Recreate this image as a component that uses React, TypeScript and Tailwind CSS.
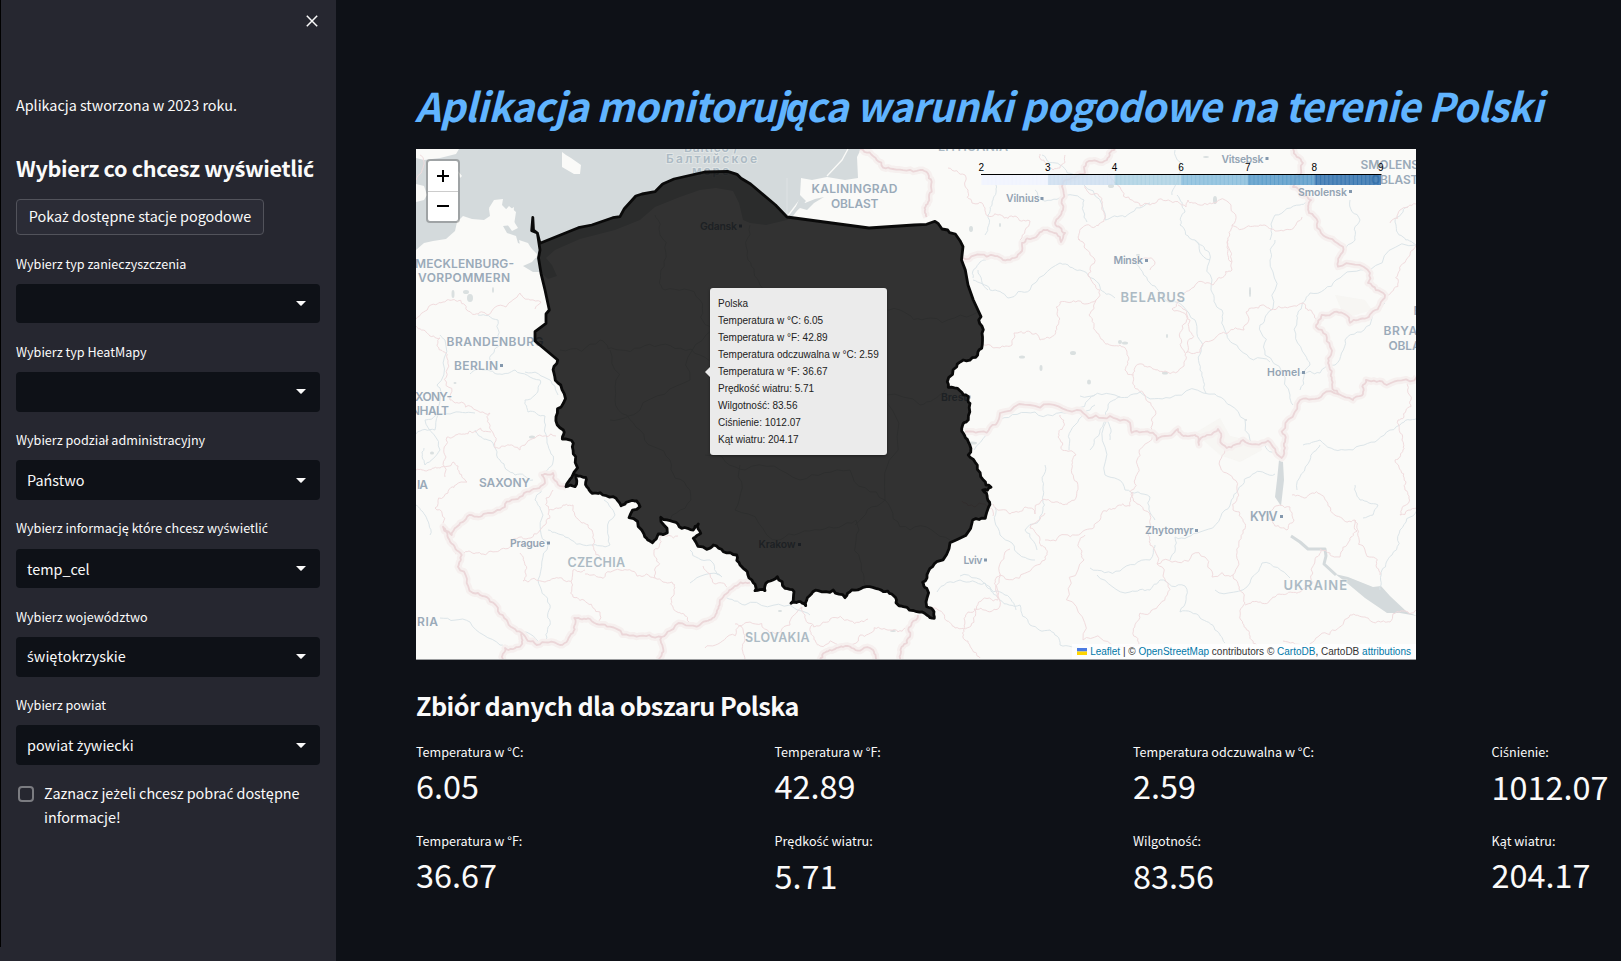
import React from "react";

type Pt = [number, number];

const parse = (s: string): Pt[] =>
  s.trim().split(/\s+/).map((p) => p.split(",").map(Number) as Pt);

/* Turns a coarse polyline into a natural looking border or river line. */
function rough(src: string, amp = 0.16, depth = 3): string {
  let pts = parse(src);
  let seed = Math.round(pts[0][0] * 13 + pts[0][1] * 7) % 9973;
  const rnd = () => {
    seed = (seed * 1103515245 + 12345) % 2147483648;
    return seed / 2147483648 - 0.5;
  };
  for (let d = 0; d < depth; d++) {
    const out: Pt[] = [];
    for (let i = 0; i < pts.length - 1; i++) {
      const [x1, y1] = pts[i];
      const [x2, y2] = pts[i + 1];
      const len = Math.hypot(x2 - x1, y2 - y1);
      out.push(pts[i]);
      if (len > 3) {
        const k = rnd() * 2 * amp;
        out.push([(x1 + x2) / 2 - (y2 - y1) * k, (y1 + y2) / 2 + (x2 - x1) * k]);
      }
    }
    out.push(pts[pts.length - 1]);
    pts = out;
  }
  return "M" + pts.map((p) => p[0].toFixed(1) + " " + p[1].toFixed(1)).join("L");
}

const NORTH_COAST =
  "540,243.3 578.4,227.7 591.8,225 612.8,217.7 620,216.7 624.3,208.7 635.8,196 642,194 655,191.7 662.6,184 674,179 704.7,172 727.6,171.3 737,174.3 741,178.3 750.6,184 775.5,205 787,217 869,228 914,225 926.6,224.3 935,221.3 938,223.3 942,229 947.7,230 949.6,232.7 955.3,234 960,240.7 963,246.7 961.5,260 965.3,270 968,285 973.3,300 981,316.7 ";
const EAST_SOUTH =
  "978.7,320 982,333.3 981.7,348.3 975.7,357.3 963.3,360 956.7,366.7 947.3,381.7 948.3,387.3 960,390.7 968.3,396.7 970,403.3 968.3,420 963.3,423.3 963.3,433.3 968.3,441.7 968.3,455 977.3,465 983.3,480 991,487.3 982.7,490 987.3,498.3 988.7,506.7 985.3,518.3 972.7,520 950,542.7 936.7,561.7 928.3,571.7 922.7,582.3 926.7,588.3 926.7,606.7 934,611.7 934.3,618.3 926.7,615 916.7,611.7 903.3,606.7 896,602.7 891.7,594 883.3,591.7 875.7,588.3 863.3,587.3 851.7,590 845,597.7 833.3,590 818.3,590.7 809.3,596 805.7,605.7 798.3,601.7 791,603.3 794,591.7 785,588.3 777.3,576.7 767.7,581.7 765,590.7 755,590.7 753.3,582.7 747.3,571.7 740,565 736.7,555 723.3,551.7 713.3,545 706.7,549.3 693.3,538.3 700.7,533.3 698.3,524 693.3,530 681.7,528.3 673.3,521.7 660.7,517.3 667.3,532.7 658.3,534 652.3,542.7 646.7,538.3 641.7,530 629,517.7 640,506.7 636.7,501 628.3,501.7 621,505.7 613.3,496.7 600,492.7 592.3,493.3 586.7,486.7 585.7,477.3 575.7,475 575,486.7 566,486.7 571.7,477.3 575.7,456.7 573.3,443.3 562.3,439 563.3,430 556,416.7 563.3,403.3 560.7,385 554,373.3 557.7,360 ";
const WEST = "L535 341L535 331.7L546 323.3L546 314L549.3 310L545 290L541 273.3L538.5 258L540 250L537.4 233L531.7 230.7L532.8 217.3L533.5 230L537.4 233L540 243.3Z";

const POLAND =
  "M" + parse(NORTH_COAST).map((p) => p.join(" ")).join("L") + rough(EAST_SOUTH, 0.2, 2).replace("M", "L") + WEST;

const MAJOR = [
  "566,487 556.7,481.7 553,473 541.7,475 545,483 526.7,491.7 506.7,501.7 490,513 476.7,516.7 460,523 451.7,535 443,526.7 450,541.7 461.7,555 458,566.7 473,593 490,601.7 506.7,620 521.7,633 536.7,645 560,645 573,633 574.3,618 590,619 610,626.7 636.7,636.7 661.7,637 670,630.7 696.7,626.7 706.7,621 716.7,613 720,600 733,588 750,582.7",
  "521.7,633 520,646.7 505,648 503,660",
  "661.7,637 663,648 658,660",
  "820,660 830,650 843,647 860,650.7 870,648 876.7,660",
  "900,660 901.7,646.7 910,636.7 911.7,623 918,615",
  "860,149 876.7,160 893,169 920,170 931.7,181.7 931.7,191.7 926,205 926.7,217",
  "962.7,258 986.7,256.7 1003,260 1020,253 1022,243 1034,238 1047.5,230 1061,242 1065,233 1055,223 1063,210 1063,183 1078,175 1085,173 1087,162 1107,160 1115,149",
  "1293,149 1303,163 1293,187 1311,200 1309,213 1321,233 1343,246.7 1338,266.7 1370,273 1368,283 1385,295 1380,305 1366.7,318 1350,322.7 1336.7,311.7 1321.7,315 1316,327 1330,346.7 1328,363 1331.7,380 1339,395",
  "965,431.7 986.7,432.7 1000,413 1040,407.7 1076.7,410 1103,418 1130,422.7 1131.7,432.7 1153,432.7 1156.7,440 1178,429 1186.7,436 1195,435 1199,445 1203,436.7 1218,429 1226.7,448 1243,440 1268,440.7 1281.7,458 1285,448 1281.7,431.7 1300,400 1323,394 1353,400 1363,394 1366,380 1386.7,385 1417,376.7",
];

const MINOR = [
  "416,319 428,308 443,302 465,305 488,315 506,307 520,293 530,300 541,302 535,309",
  "416,326 440,338 447,358 450,400 472,407 490,413 491,430 495,448 520,450 535,438 556,436",
  "445,477 447,437 470,431 491,432",
  "416,470 440,468 453,462 467,482 448,493 435,508 443,523",
  "455,554 483,554 512,540 545,525 549,510 573,505 582,523 592,530 594,550 600,557",
  "520,553 523,581 545,582 572,580 573,570 585,570",
  "571,581 573,597 600,612 598,623",
  "585,574 620,570 655,578 672,582 673,607 690,623",
  "655,578 654,550 660,538 678,536",
  "549,510 546,498 553,490",
  "703,566 715,584 727,587",
  "735,624 750,622 790,625 802,607 808,623 830,619 850,621 868,619",
  "705,648 740,625 745,660",
  "812,625 820,646 860,635 890,630 905,628",
  "924,600 938,610 955,628 971,626 974,609 1000,606 1005,552 1010,549",
  "962,501 975,507 985,504 993,516",
  "993,504 1010,514 1025,507 1035,514 1042,500 1058,502 1070,502 1078,487 1072,468 1076,455 1058,437 1060,415",
  "1130,492 1137,460 1147,443 1152,430 1145,395 1133,375 1142,364 1165,371 1184,366 1187,352 1200,352 1213,340 1228,333 1244,330 1246,312 1262,305 1285,307 1303,303 1317,320",
  "984,345 1000,348 1012,345 1014,333 1040,340 1058,325 1060,302 1096,300 1089,315 1097,333 1120,345 1125,370 1133,375",
  "1096,300 1100,290 1088,276 1094,258 1083,242 1078,239",
  "1187,352 1190,320 1172,309 1180,299 1190,290 1197,283 1213,285 1232,270 1228,240",
  "1185,353 1188,318 1178,305",
  "948,168 965,175 968,190 972,203 985,208 988,216 1015,216 1030,221 1020,240",
  "1040,154 1053,170 1060,168 1065,155",
  "1085,186 1102,204 1105,218 1082,228 1080,240",
  "1105,175 1120,187 1150,205 1186,207 1188,200 1210,203 1231,205 1232,225 1245,228 1260,225 1275,231 1302,217",
  "1232,225 1228,240 1232,262",
  "1385,297 1400,270 1410,255 1416,245",
  "1000,575 1045,560 1040,540 1030,528 1045,513",
  "1045,540 1085,530 1100,520 1103,511 1130,506 1132,492 1150,520 1150,545 1157,564 1205,557 1212,577 1233,575 1243,530 1233,510 1237,490 1225,450",
  "1157,564 1160,604 1140,613 1139,645 1083,640 1084,560 1085,535",
  "1000,575 998,600 968,612 965,640 980,658",
  "1233,575 1245,603 1241,620 1257,645",
  "1245,605 1275,597 1300,592 1313,583 1315,560 1320,549 1340,557 1350,540 1355,520 1330,507 1320,494 1292,495",
  "1283,641 1320,635 1350,615 1365,617 1390,622 1417,610",
  "1280,505 1268,515 1287,530 1294,520 1290,507 1280,505",
  "1355,520 1365,550 1380,575",
  "1417,508 1400,515 1405,490 1395,460 1402,440 1398,420 1411,400 1410,380",
  "1130,262 1146,258 1155,262 1150,270",
  "416,180 422,170 420,155",
  "1390,223 1400,210 1416,204",
];

const RIVERS = [
  "416,434 435,430 440,400 437,385 445,340 440,335",
  "470,374 485,370 500,374 515,370 540,380 535,395 525,400 528,412 545,416 547,440 553,462 545,475",
  "424,448 425,465 440,450 425,420 450,414 475,413",
  "478,315 498,320 500,345 490,360",
  "475,430 488,440 500,460 515,475 533,480",
  "525,372 550,380 558,395",
  "545,483 535,500 543,515 548,545 538,580 550,605 550,625 545,645 520,630",
  "548,530 565,537 590,545 610,545 615,515 604,500",
  "440,618 470,622 500,645 520,648",
  "690,550 710,560 722,577 690,583",
  "725,595 745,605 790,605 810,615",
  "937,592 960,580 985,583 1005,595 1016,610",
  "960,576 990,587 1000,600 1020,605 1030,625 1050,630 1060,645 1083,650",
  "995,507 1000,535 1020,555 1035,560",
  "1045,465 1043,490 1043,510 1025,530 1037,550",
  "973,280 990,290 1008,298 1030,290 1060,263 1080,270 1100,287 1115,298",
  "973,278 980,262 990,256",
  "1195,240 1209,252 1211,290 1222,310 1227,335 1240,350 1270,362",
  "1133,262 1150,283 1165,300 1195,320 1203,345 1200,370 1206,393",
  "1080,396 1115,395 1140,392 1170,398 1215,394 1230,405 1250,440 1255,443",
  "974,450 1000,420 1035,412 1070,412 1095,395",
  "1069,450 1075,425 1095,405",
  "1110,440 1105,420 1108,405 1120,397",
  "1090,450 1100,430 1107,420 1105,475 1125,490 1150,497 1155,520",
  "1275,240 1270,260 1273,308 1260,325 1265,355 1290,395 1293,405",
  "1416,245 1370,270 1336,280 1310,293 1302,305 1297,320 1305,355 1310,365 1300,390",
  "1300,373 1320,373 1335,365 1345,340 1370,325 1385,303",
  "1303,445 1320,440 1345,450 1375,442 1400,425 1417,418",
  "1297,490 1310,460 1320,445",
  "1275,474 1255,473 1238,490 1225,510 1200,532 1175,537 1170,560",
  "1280,458 1265,445",
  "1355,485 1360,500 1378,505 1373,515 1363,518",
  "1380,590 1382,570 1392,555 1400,530 1417,510",
  "1090,568 1120,571 1150,560 1155,545",
  "1097,575 1130,592 1150,590 1160,580 1185,586 1180,612 1200,618 1215,630 1225,643",
  "1215,590 1250,583 1262,563 1290,578",
  "1078,175 1060,165 1042,155",
  "1035,190 1042,200 1065,195 1084,200 1087,222",
  "1084,185 1105,220 1125,217 1150,203",
  "1177,195 1185,212 1180,225 1195,240 1210,260",
  "1270,240 1275,215 1300,205 1313,200",
  "1350,200 1360,220 1355,240 1342,250",
  "1408,207 1395,222 1403,237 1416,245",
  "996,185 993,200 988,215 985,235",
  "978,270 988,290",
  "416,505 425,515 430,535",
  "1175,150 1178,175 1172,195",
];

const BLOBS: [number, number, number, number][] = [
  [1022, 357, 3, 1.5], [1041, 368, 1.5, 3], [1073, 353, 3, 2], [1120, 342, 2, 2], [1125, 343, 3, 1.5],
  [1089, 382, 2, 2.5], [1165, 373, 3, 1.5], [1250, 292, 1, 5], [1167, 336, 1, 2], [1246, 420, 1, 1],
  [971, 229, 2, 3], [1000, 225, 1, 2], [1111, 186, 3, 2], [1215, 200, 2, 4], [1206, 157, 3, 1], [532, 437, 3, 1.5],
  [455, 383, 1.5, 1], [432, 453, 2, 1.5], [453, 294, 1.5, 4], [466, 292, 3, 2], [470, 298, 3, 4], [493, 290, 1, 3],
  [1247, 442, 5, 1], [972, 443, 5, 1.5], [893, 631, 3, 1], [780, 611, 2, 1], [1138, 255, 2, 1],
];

type L = [string, number, number, number, number?];
/* text, left, vertical centre, width, size */
const REGION: L[] = [
  ["MECKLENBURG-", 415, 263.5, 99, 12], ["VORPOMMERN", 418, 278, 92, 12], ["BRANDENBURG", 446.5, 341.5, 97, 12],
  ["XONY-", 415, 396.5, 37, 12], ["NHALT", 411, 411, 38, 12], ["SAXONY", 479, 482.5, 51, 12], ["IA", 417, 484.5, 11, 12],
  ["RIA", 417, 622, 21, 12], ["KALININGRAD", 811.5, 189, 86, 12], ["OBLAST", 831, 203.5, 47.5, 12],
  ["SMOLENSK", 1360.5, 165, 67, 12], ["OBLAST", 1371, 179.5, 47.5, 12], ["BRYANSK", 1383.5, 331, 61, 12],
  ["OBLAST", 1388.5, 346, 47.5, 12], ["B", 1413.5, 311, 9, 12], ["BERLIN", 454, 365.5, 44, 12], ["KYIV", 1250, 516.5, 27.5, 12.5],
];
const COUNTRY: L[] = [
  ["CZECHIA", 567.5, 562, 57.5, 12.5], ["SLOVAKIA", 745, 637, 64.5, 12.5], ["BELARUS", 1120.5, 297.5, 64.5, 13],
  ["UKRAINE", 1283.5, 585, 63.5, 13], ["LITHUANIA", 938, 146.5, 70, 12.5],
  ["Baltico /", 684, 147.5, 54, 12], ["Балтийское", 666, 159, 91, 12], ["море", 692, 170.5, 37, 12],
];
const CITY: L[] = [
  ["Prague", 510, 543, 35], ["Krakow", 758.5, 544.5, 37], ["Lviv", 963.5, 560, 19], ["Brest", 941, 397, 26],
  ["Gdansk", 700, 226, 37], ["Vilnius", 1006, 198.5, 33.5], ["Vitsebsk", 1221.5, 159, 42], ["Smolensk", 1298, 192, 49],
  ["Minsk", 1113.5, 260.5, 29.5], ["Homel", 1267, 372.5, 33], ["Zhytomyr", 1145, 530.5, 48.5],
];
const DOTS: Pt[] = [
  [501.5, 365.5], [1281.5, 516.5], [548.5, 543], [799.5, 544.5], [985.5, 560], [969, 397], [740.5, 226], [1042, 198.5],
  [1267, 158.5], [1350.5, 191.5], [1146.5, 260.5], [1303.5, 372.5], [1196.5, 530.5],
];

function Labels({ items, fill, weight }: { items: L[]; fill: string; weight: number }) {
  return (
    <g fill={fill} fontWeight={weight} stroke="#fafaf8" strokeWidth="2" strokeOpacity="0.35" paintOrder="stroke">
      {items.map(([t, x, y, w, s = 10.5], i) => (
        <text key={i} x={x} y={y + s * 0.36} fontSize={s} textLength={w} lengthAdjust="spacing">{t}</text>
      ))}
    </g>
  );
}

const SCALE = ["#eff3ff", "#cbddf0", "#a6cee2", "#7fb8da", "#4b93c5", "#2166a8"];

function MapCanvas() {
  return (
    <svg viewBox="416 149 1000 511" className="block h-[511px] w-[1000px]" fontFamily="Inter, 'Noto Sans', sans-serif">
      <rect x="416" y="149" width="1000" height="511" fill="#fafaf8" />
      <path fill="#d4dadc" d="M416 149H861L857 157L858 178L845 180L827 177L812 180L801 178L800 195L806 201L799 208L793 216L787 220L766 225L750 223L743 220L739 203L733 191L716 188L700 190L680 197L655 207L640 220L615 230L580 239L555 250L546 258L552 265L557 276L548 279L540 272L533 272L523 266L532 262L538 255L530 247L518 243L516 236L507 233L503 226L514 225L516 212L509 206L500 216L497 202L489 209L490 216L484 220L472 219L463 216L457 222L455 231L446 239L433 241L424 243L416 250Z" />
      <path fill="#fafaf8" d="M562 152L566 155L571 158L581 165L580 174L574 174L562 167ZM416 149H459L456 154L440 158L424 160L416 158ZM416 184L424 186L427 195L424 200L416 202ZM458 171L462 176L460 178ZM489 208L494 200L503 199L502 205L508 211L514 207L513 220L518 228L512 231L505 221L496 222ZM519 240L528 243L537 258L529 256L521 250Z" />
      <g fill="none" stroke="#fafaf8" strokeWidth="1.3">
        <path d="M848 149L842 160L827 176M800 200L787 217" />
        <path d="M787 178V214" strokeWidth="0.6" opacity="0.5" />
      </g>
      <path fill="#d4dadc" d="M800 197L805 203L815 199L824 197L814 203L807 210L800 208L793 214Z" />
      <g fill="#f3f1ee">
        <path d="M1195 433L1220 418L1230 436L1260 443L1262 450L1240 462L1220 455Z" opacity=".5" />
        <path d="M1335 295L1365 300L1372 310L1345 318Z" opacity=".5" />
      </g>
      <g fill="#d4dadc">
        {BLOBS.map(([x, y, rx, ry], i) => <ellipse key={i} cx={x} cy={y} rx={rx} ry={ry} opacity="0.85" />)}
        <path d="M1279 460L1283 462L1284 480L1281 506L1275 497L1277 480Z" />
        <path d="M1335 574L1348 577L1373 587L1381 586L1390 596L1407 612L1417 616L1400 613L1387 613L1365 598L1347 583Z" />
      </g>
      <path d="M1291 536L1300 542L1308 549L1318 549L1325 549L1326 556L1324 564L1336 575" fill="none" stroke="#d4dadc" strokeWidth="3" strokeLinejoin="round" />
      <g fill="none" stroke="#dce5e9" strokeWidth="1">{RIVERS.map((r, i) => <path key={i} d={rough(r, 0.17, 3)} />)}</g>
      <g fill="none" stroke="#f1dcde" strokeWidth="1">{MINOR.map((r, i) => <path key={i} d={rough(r, 0.24, 4)} />)}</g>
      <g fill="none" strokeLinejoin="round">
        {MAJOR.map((r, i) => <path key={i} d={rough(r, 0.2, 3)} stroke="#f6f0ef" strokeWidth="7" />)}
        {MAJOR.map((r, i) => <path key={i} d={rough(r, 0.2, 3)} stroke="#ebd6d8" strokeWidth="1.8" />)}
      </g>
      <g fill="none" stroke="#dfe3e4" strokeWidth="1">
        <path d={rough("655,215 660,235 661,270 665,290 700,300 712,330 690,380 640,410 610,420", 0.2)} />
        <path d={rough("560,350 600,340 620,350 660,345 700,355 740,370", 0.2)} />
        <path d={rough("750,225 748,260 760,285 800,300 860,290 900,310 930,318 978,312", 0.2)} />
        <path d={rough("610,350 615,400 640,430 670,460 690,490 670,520", 0.2)} />
        <path d={rough("705,455 745,470 800,480 850,470 885,500 910,530 950,540", 0.2)} />
        <path d={rough("740,465 735,510 780,540 820,530 856,520 860,560 865,588", 0.2)} />
        <path d={rough("885,400 885,500 855,525", 0.15)} />
        <path d={rough("850,395 920,405 945,390", 0.15)} />
      </g>
      <Labels items={REGION} fill="#9aaab9" weight={600} />
      <Labels items={COUNTRY} fill="#acbac4" weight={600} />
      <Labels items={CITY} fill="#93a3b3" weight={600} />
      <g fill="#8498ad">{DOTS.map(([x, y], i) => <rect key={i} x={x - 1.5} y={y - 1.5} width="3" height="3" />)}</g>
      <path d={POLAND} fill="#000" fillOpacity="0.8" stroke="#0a0a0a" strokeWidth="2.8" strokeLinejoin="round" />
      {SCALE.map((c, i) => (
        <g key={i} fill={c}>
          <rect x={981.3 + i * 66.6} y="175" width="66.7" height="10" fillOpacity="0.78" />
          {Array.from({ length: 16 }, (_, k) => (
            <rect key={k} x={983 + i * 66.6 + k * 4.1} y="175" width="1" height="10" fillOpacity="0.5" />
          ))}
        </g>
      ))}
      <path d="M981 174.5H1381.5" stroke="#000" />
      <g fontFamily="'Liberation Sans', sans-serif" fontSize="10" textAnchor="middle" fill="#000">
        {["2", "3", "4", "6", "7", "8", "9"].map((t, i) => <text key={t} x={981.3 + i * 66.6} y="170.5">{t}</text>)}
      </g>
    </svg>
  );
}

const TIP = [
  "Polska", "Temperatura w °C: 6.05", "Temperatura w °F: 42.89", "Temperatura odczuwalna w °C: 2.59", "Temperatura w °F: 36.67",
  "Prędkość wiatru: 5.71", "Wilgotność: 83.56", "Ciśnienie: 1012.07", "Kąt wiatru: 204.17",
];

function WeatherMap() {
  return (
    <div className="relative h-[511px] w-[1000px] shrink-0 overflow-hidden font-['Liberation_Sans',sans-serif]">
      <MapCanvas />
      <div className="absolute left-[10px] top-[10px] w-[34px] rounded-[4px] border-2 border-black/25 bg-white bg-clip-padding text-black">
        <button className="flex h-[31px] w-full items-center justify-center border-b border-[#ccc]">
          <svg width="12" height="12" viewBox="0 0 12 12" stroke="#000" strokeWidth="2"><path d="M6 0V12M0 6H12" /></svg>
        </button>
        <button className="flex h-[29px] w-full items-center justify-center pb-px">
          <svg width="12" height="12" viewBox="0 0 12 12" stroke="#000" strokeWidth="2"><path d="M0 6H12" /></svg>
        </button>
      </div>
      <div className="absolute left-[294px] top-[139px] h-[167px] w-[177px] rounded-[3px] bg-[#ebebeb] pl-2 pt-[7px] text-[10px] leading-[17px] text-[#222] shadow-[0_1px_3px_rgba(0,0,0,0.4)]">
        <svg className="absolute -left-[5px] top-[79px]" width="5" height="10"><path d="M5 0L0 5L5 10Z" fill="#ebebeb" /></svg>
        {TIP.map((t, i) => <div key={i} className="whitespace-nowrap">{t}</div>)}
      </div>
      <div className="absolute bottom-px right-0 flex h-[15px] items-center whitespace-pre bg-white/80 px-[5px] text-[10px] leading-[15px] text-[#333]">
        <svg width="10" height="7" className="mr-[3px]"><path d="M0 0H10V3.5H0Z" fill="#4c7be1" /><path d="M0 3.5H10V7H0Z" fill="#ffd500" /></svg>
        <span className="text-[#0078a8]">Leaflet</span>{" | © "}
        <span className="text-[#0078a8]">OpenStreetMap</span>{" contributors © "}
        <span className="text-[#0078a8]">CartoDB</span>{", CartoDB "}
        <span className="text-[#0078a8]">attributions</span>
      </div>
      <div className="absolute inset-x-0 bottom-0 h-px bg-[#9b9d9f]" />
    </div>
  );
}

function Pl({ children }: { children: string }) {
  return (
    <>
      {children.split(/([śćż]+)/).map((part, i) =>
        i % 2 ? <span key={i} className="font-['Open_Sans',sans-serif]">{part}</span> : part
      )}
    </>
  );
}

function Select({ label, value }: { label: string; value: string }) {
  return (
    <div className="mb-[14.3px] h-[74px] shrink-0">
      <div className="h-[34.4px] pt-[3px] text-[12.6px] leading-[21px]"><Pl>{label}</Pl></div>
      <div className="flex h-[39.6px] items-center justify-between rounded-[4px] bg-[#0e1117] pl-[11px] pr-[14px]">
        <span className="text-[14.4px] leading-6"><Pl>{value}</Pl></span>
        <svg width="10" height="5" viewBox="0 0 10 5"><path d="M0 0H10L5.6 4.6Q5 5 4.4 4.6Z" fill="#fafafa" /></svg>
      </div>
    </div>
  );
}

function Metric({ label, value }: { label: string; value: string }) {
  return (
    <div className="h-[89px] whitespace-nowrap">
      <div className="text-[12.6px] leading-[21px]"><Pl>{label}</Pl></div>
      <div className="text-[32.4px] leading-[45px]">{value}</div>
    </div>
  );
}

export default function App() {
  return (
    <div className="flex h-[961px] w-[1621px] overflow-hidden bg-[#0e1117] font-['Noto_Sans_CJK_SC','Noto_Sans',sans-serif] text-[#fafafa]">
      <aside className="relative flex h-full w-[336px] shrink-0 flex-col bg-[#262730] pl-4 pr-4">
        <div className="absolute left-0 top-0 h-[947px] w-px bg-black" />
        <div className="flex h-[42px] justify-end pr-[2px] pt-[15px]">
          <svg width="12" height="12" viewBox="0 0 12 12" stroke="#fafafa" strokeWidth="1.5"><path d="M0.8 0.8L11.2 11.2M11.2 0.8L0.8 11.2" /></svg>
        </div>
        <p className="mt-[51px] text-[14.4px] leading-6 tracking-[-0.03px]">Aplikacja stworzona w 2023 roku.</p>
        <h2 className="mt-[35px] h-[47px] whitespace-nowrap text-[21.6px] font-bold leading-8 tracking-[-0.35px]"><Pl>Wybierz co chcesz wyświetlić</Pl></h2>
        <button className="flex h-9 w-[248px] shrink-0 items-center justify-center rounded-[4px] border border-[#52535b] bg-[#2b2c36] pb-[2px] text-[14.4px] tracking-[-0.03px]"><span><Pl>Pokaż dostępne stacje pogodowe</Pl></span></button>
        <div className="mt-[14.5px] flex flex-col">
          <Select label="Wybierz typ zanieczyszczenia" value="" />
          <Select label="Wybierz typ HeatMapy" value="" />
          <Select label="Wybierz podział administracyjny" value="Państwo" />
          <Select label="Wybierz informację które chcesz wyświetlić" value="temp_cel" />
          <Select label="Wybierz województwo" value="świętokrzyskie" />
          <Select label="Wybierz powiat" value="powiat żywiecki" />
        </div>
        <div className="mt-[1.5px] flex gap-[10px] pl-[2px]">
          <span className="mt-[5px] h-4 w-4 shrink-0 rounded-[4px] border-2 border-[#7b7c81]" />
          <p className="whitespace-nowrap text-[14.4px] leading-[23.5px] tracking-[-0.03px]"><Pl>Zaznacz jeżeli chcesz pobrać dostępne</Pl><br />informacje!</p>
        </div>
      </aside>
      <main className="flex min-w-0 flex-1 flex-col pl-20">
        <h1 className="-ml-px mt-[78px] h-[71px] shrink-0 whitespace-nowrap text-[39.6px] font-bold italic leading-[53px] tracking-[-0.62px] text-[#60b4ff]">
          Aplikacja monitoruj<span className="-ml-[1px] -mr-[3px] font-['Open_Sans',sans-serif]">ą</span>ca warunki pogodowe na terenie Polski
        </h1>
        <WeatherMap />
        <h3 className="mt-[27px] h-[54px] shrink-0 whitespace-nowrap text-[25.2px] font-bold leading-9 tracking-[-0.54px]">Zbiór danych dla obszaru Polska</h3>
        <div className="grid w-[1434px] grid-cols-4">
          <Metric label="Temperatura w °C:" value="6.05" />
          <Metric label="Temperatura w °F:" value="42.89" />
          <Metric label="Temperatura odczuwalna w °C:" value="2.59" />
          <Metric label="Ciśnienie:" value="1012.07" />
          <Metric label="Temperatura w °F:" value="36.67" />
          <Metric label="Prędkość wiatru:" value="5.71" />
          <Metric label="Wilgotność:" value="83.56" />
          <Metric label="Kąt wiatru:" value="204.17" />
        </div>
      </main>
    </div>
  );
}
